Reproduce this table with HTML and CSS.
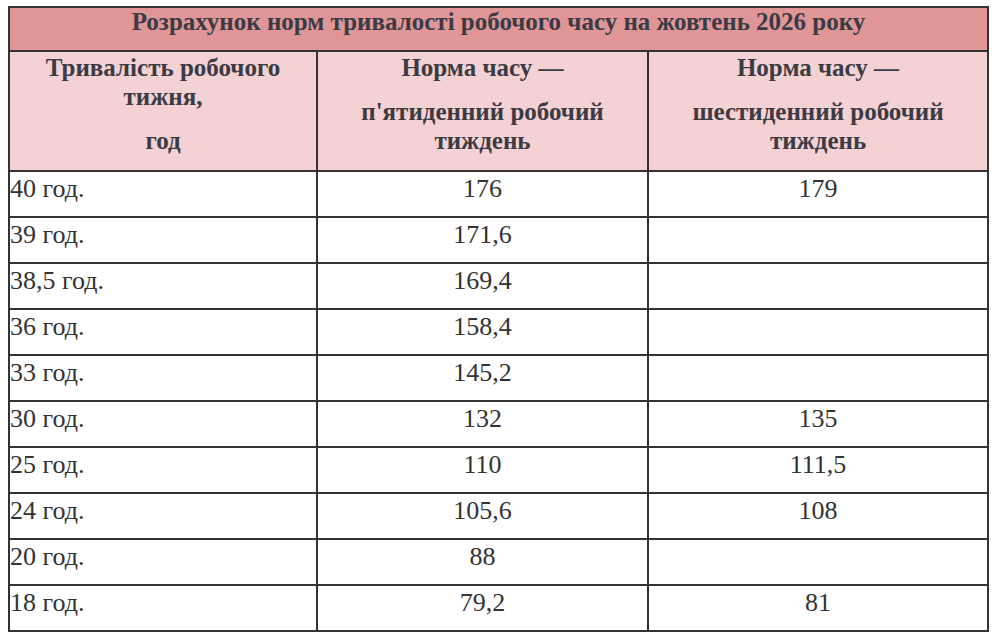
FILE: index.html
```html
<!DOCTYPE html>
<html lang="uk">
<head>
<meta charset="utf-8">
<title>Розрахунок норм</title>
<link rel="stylesheet" href="styles.css">
</head>
<body>
<table class="norms">
  <colgroup>
    <col class="c1"><col class="c2"><col class="c3">
  </colgroup>
  <thead>
    <tr class="title-row"><th colspan="3">Розрахунок норм тривалості робочого часу на жовтень 2026 року</th></tr>
    <tr class="head-row">
      <th><p>Тривалість робочого тижня,</p><p>год</p></th>
      <th><p>Норма часу —</p><p>п'ятиденний робочий тиждень</p></th>
      <th><p>Норма часу —</p><p>шестиденний робочий тиждень</p></th>
    </tr>
  </thead>
  <tbody>
    <tr><td>40 год.</td><td>176</td><td>179</td></tr>
    <tr><td>39 год.</td><td>171,6</td><td></td></tr>
    <tr><td>38,5 год.</td><td>169,4</td><td></td></tr>
    <tr><td>36 год.</td><td>158,4</td><td></td></tr>
    <tr><td>33 год.</td><td>145,2</td><td></td></tr>
    <tr><td>30 год.</td><td>132</td><td>135</td></tr>
    <tr><td>25 год.</td><td>110</td><td>111,5</td></tr>
    <tr><td>24 год.</td><td>105,6</td><td>108</td></tr>
    <tr><td>20 год.</td><td>88</td><td></td></tr>
    <tr><td>18 год.</td><td>79,2</td><td>81</td></tr>
  </tbody>
</table>
</body>
</html>
```
FILE: styles.css
```css
html, body {
  background: #ffffff;
}
body {
  margin: 6px 6px 0 8px;
  font-family: "Liberation Serif", Tinos, "Times New Roman", serif;
  color: #333333;
}
.norms {
  width: 981px;
  border-collapse: collapse;
  table-layout: fixed;
}
.norms .c1 { width: 308px; }
.norms .c2 { width: 331px; }
.norms .c3 { width: 340px; }
.norms th, .norms td {
  border: 2px solid #333333;
  vertical-align: top;
  font-family: "Liberation Serif", Tinos, "Times New Roman", serif;
}
.title-row th {
  background: #e09597;
  color: #3a3b45;
  font-size: 25px;
  font-weight: bold;
  line-height: 28px;
  padding: 0 2px 14px;
  text-align: center;
}
.head-row th {
  background: #f4d1d2;
  color: #3a3b45;
  font-size: 25px;
  font-weight: bold;
  line-height: 29px;
  padding: 1px 20px 15px;
  text-align: center;
}
.head-row p {
  margin: 0;
}
.head-row p + p {
  margin-top: 15px;
}
.norms td {
  font-size: 26px;
  line-height: 30px;
  padding: 2px 1px 12px;
  text-align: center;
  color: #333333;
}
.norms td:first-child {
  text-align: left;
  padding-left: 0;
}
```
